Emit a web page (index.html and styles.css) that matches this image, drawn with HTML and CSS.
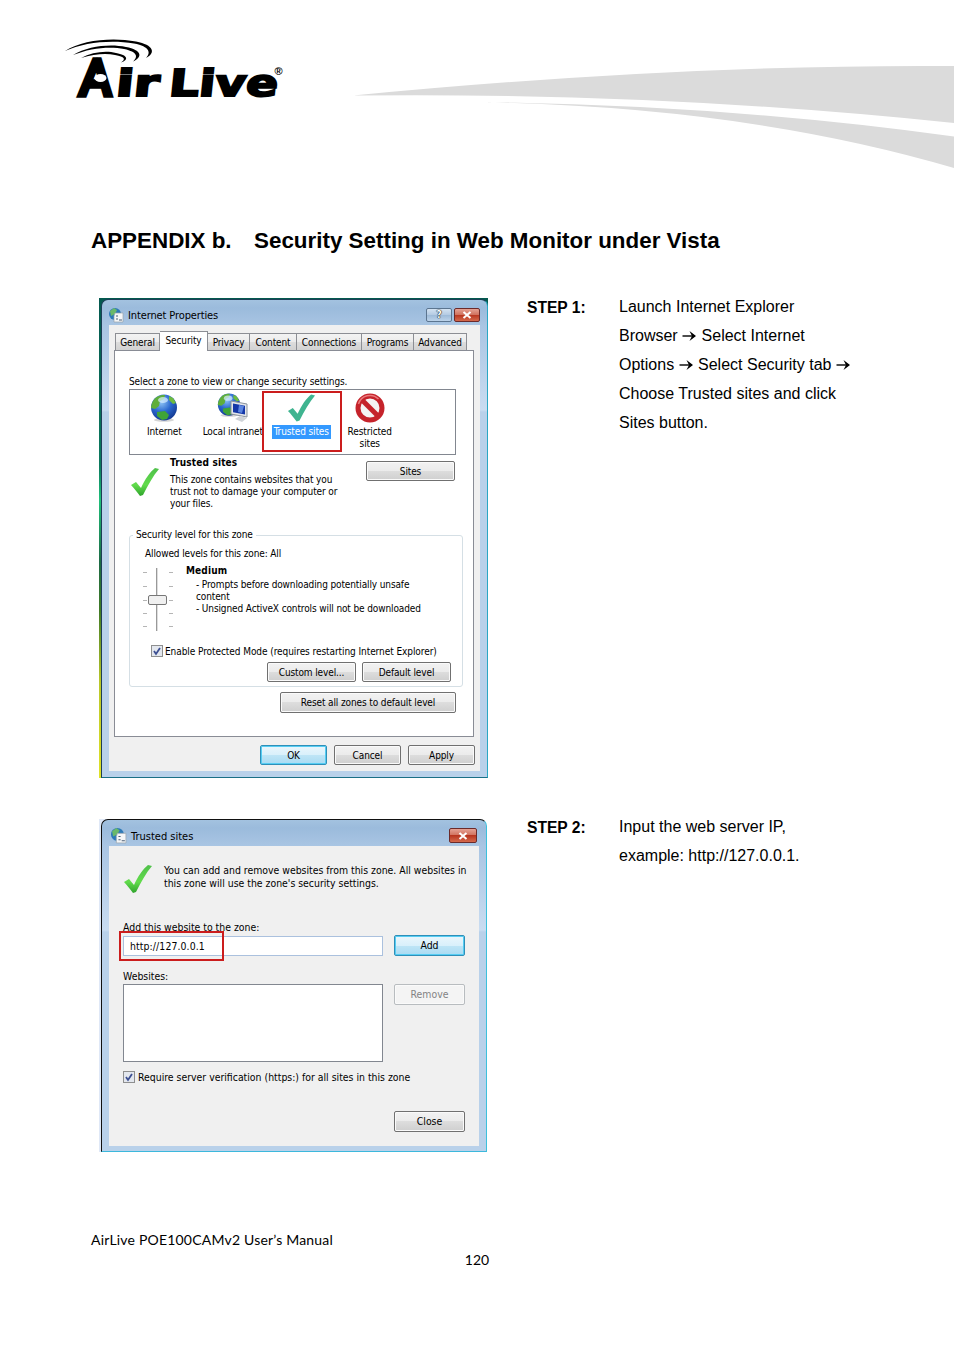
FILE: index.html
```html
<!DOCTYPE html>
<html lang="en">

<head>
    <meta charset="UTF-8">
    <title>AirLive POE100CAMv2 User's Manual</title>
    <link rel="stylesheet" href="styles.css">
</head>

<body>
    <svg width="0" height="0" class="defs">
        <defs>
            <radialGradient id="sea" cx="40%" cy="30%" r="75%">
                <stop offset="0" stop-color="#8fc4f5" />
                <stop offset="0.5" stop-color="#2a68cf" />
                <stop offset="1" stop-color="#12358c" />
            </radialGradient>
            <linearGradient id="tick" x1="0" y1="0" x2="0" y2="1">
                <stop offset="0" stop-color="#4fc04a" />
                <stop offset="0.6" stop-color="#62dc4c" />
                <stop offset="1" stop-color="#2fa32c" />
            </linearGradient>
            <symbol id="globe" viewBox="0 0 28 28">
                <ellipse cx="14" cy="26" rx="10" ry="1.8" fill="#d5d5d5" />
                <circle cx="14" cy="13.500" r="13" fill="url(#sea)" />
                <path d="M3 7C6 2 11 .8 15 1l-1 4-4 2-1 5-4 3-4-1C1 11 2 9 3 7z" fill="#5fae3a" />
                <path d="M19 2l4 2 3 5-3 1-4-4z" fill="#6dbb3e" />
                <path d="M7 18l8-1 4 4-2 4-5 1-5-4z" fill="#3fa437" />
                <ellipse cx="13" cy="6" rx="5" ry="3" fill="#d9efff" opacity=".7" />
            </symbol>
            <symbol id="check" viewBox="0 0 30 30">
                <path d="M1 18l5-3 5 6C15 12 20 5 25 1l4 1C23 9 18 18 13 28l-3 1C7 25 4 21 1 18z" />
            </symbol>
            <symbol id="arrow" viewBox="0 0 15 12">
                <path d="M.5 6h12" stroke="#000" stroke-width="1.400" />
                <path d="M7.500 1L14 6 7.500 11 10 6z" />
            </symbol>
            <symbol id="appicon" viewBox="0 0 15 15">
                <circle cx="6" cy="6" r="6" fill="#2c79b8" />
                <path d="M1 3l4-3 3 2-2 4-4 2z" fill="#69b86a" />
                <path d="M6 5h8v9H5V8z" fill="#f4f6f8" stroke="#9aa5ae" stroke-width=".7" />
                <path d="M7 8h2M7 11h2M10 12h3" stroke="#4c5f75" />
            </symbol>
        </defs>
    </svg>

    <header class="page-header">
        <svg class="logo" width="222" height="62" viewBox="64 38 222 62">
            <path d="M65 51C82 40 112 37 136 41.500C154 45 156 53 146 58C151 53 150 46.500 134 43.500C112 39.500 84 42 65 51z" />
            <path d="M73 55C88 46 110 43.500 126 47C142 50 143 57 133 61.500C138 57 138 52 124 49C110 46 90 48 73 55z" />
            <path d="M81 58C92 52 106 50.500 116 53C128 55 129 60 121 62.500C126 59 125 57 115 55C106 53 94 54 81 58z" />
            <g class="logo-text">
                <text class="big-a" x="0" y="0" font-size="48" textLength="31" lengthAdjust="spacingAndGlyphs" transform="translate(79.500 94.500) skewX(-3)">A</text>
                <text x="0" y="0" font-size="37" textLength="43" lengthAdjust="spacingAndGlyphs" transform="translate(115 96) skewX(-6)">ir</text>
                <text x="0" y="0" font-size="37" textLength="109" lengthAdjust="spacingAndGlyphs" transform="translate(168 96) skewX(-6)">Live</text>
            </g>
            <ellipse cx="100.500" cy="78" rx="6" ry="4" fill="#fff" />
            <text class="reg" x="274.500" y="75">®</text>
        </svg>
        <svg class="swoosh" width="614" height="130" viewBox="340 50 614 130">
            <path d="M353 95.500Q680 64 954 66V123Q660 92 353 95.500z" />
            <path d="M465 102Q720 104 954 136.500V168Q740 105 465 102z" />
        </svg>
    </header>

    <main class="content">
        <h1><span class="num">APPENDIX b.</span><span>Security Setting in Web Monitor under Vista</span></h1>

        <section class="step">
            <div class="shot shot-props">
                <div class="window">
                    <div class="titlebar">
                        <svg width="15" height="15"><use href="#appicon" /></svg>
                        <span class="title">Internet Properties</span>
                        <span class="win-btn help">?</span>
                        <span class="win-btn close"><svg width="10" height="8" viewBox="0 0 10 8"><path d="M1.500 1l7 6M8.500 1l-7 6" /></svg></span>
                    </div>
                    <div class="client">
                        <div class="tabs">
                            <span class="tab t1">General</span>
                            <span class="tab t2 active">Security</span>
                            <span class="tab t3">Privacy</span>
                            <span class="tab t4">Content</span>
                            <span class="tab t5">Connections</span>
                            <span class="tab t6">Programs</span>
                            <span class="tab t7">Advanced</span>
                        </div>
                        <div class="panel">
                            <p class="hint">Select a zone to view or change security settings.</p>
                            <div class="zones">
                                <div class="zone">
                                    <svg width="28" height="30"><use href="#globe" /></svg>
                                    <span>Internet</span>
                                </div>
                                <div class="zone">
                                    <svg width="32" height="30" viewBox="0 0 32 30">
                                        <use href="#globe" width="24" height="24" />
                                        <path d="M14 8l16 3v13l-16-3z" fill="#e3e6ea" stroke="#8b949e" />
                                        <path d="M16 10.500l12 2.200v8.800l-12-2.200z" fill="#1437a8" />
                                        <path d="M22 12l5 1-2 7-4-1z" fill="#5c86e0" />
                                        <path d="M18 26l5-3 7 2-5 4z" fill="#cfd3d8" />
                                    </svg>
                                    <span>Local intranet</span>
                                </div>
                                <div class="zone selected">
                                    <svg width="29" height="30" fill="#3fb490"><use href="#check" /></svg>
                                    <span>Trusted sites</span>
                                </div>
                                <div class="zone">
                                    <svg width="30" height="30" viewBox="0 0 30 30">
                                        <circle cx="15" cy="15" r="12" fill="#f4f4f4" stroke="#c5232b" stroke-width="5" />
                                        <path d="M7 7l16 16" stroke="#c5232b" stroke-width="5" />
                                        <path d="M3.500 11a12 12 0 0 1 20-5" fill="none" stroke="#ea7a7c" stroke-width="1.500" />
                                    </svg>
                                    <span>Restricted<br>sites</span>
                                </div>
                                <div class="mark mark-zone"></div>
                            </div>
                            <div class="details">
                                <svg width="30" height="30" fill="url(#tick)"><use href="#check" /></svg>
                                <div class="about">
                                    <b>Trusted sites</b>
                                    <p>This zone contains websites that you<br>trust not to damage your computer or<br>your files.</p>
                                </div>
                                <span class="btn sites">Sites</span>
                            </div>
                            <div class="group">
                                <span class="legend">Security level for this zone</span>
                                <p class="allowed">Allowed levels for this zone: All</p>
                                <div class="level">
                                    <svg width="32" height="66" viewBox="142 567 32 66">
                                        <path d="M143 572.500h4M143 586.500h4M143 600.500h4M143 613.500h4M143 626.500h4M169 572.500h4M169 586.500h4M169 600.500h4M169 613.500h4M169 626.500h4" stroke="#b5b5b5" />
                                        <path d="M156.500 568v63" stroke="#999" />
                                        <path d="M157.500 568v63" stroke="#ddd" />
                                        <rect x="148.500" y="595.500" width="18" height="9" rx="1.500" fill="#f0f0f0" stroke="#777" />
                                    </svg>
                                    <div class="level-text">
                                        <b>Medium</b>
                                        <p>- Prompts before downloading potentially unsafe<br>content<br>- Unsigned ActiveX controls will not be downloaded</p>
                                    </div>
                                </div>
                                <div class="check-row">
                                    <span class="box"><svg width="8" height="9" viewBox="0 0 8 9"><path d="M1 4l2 3 4-6" /></svg></span>
                                    <span class="protect">Enable Protected Mode (requires restarting Internet Explorer)</span>
                                </div>
                                <div class="level-buttons">
                                    <span class="btn">Custom level...</span>
                                    <span class="btn">Default level</span>
                                </div>
                            </div>
                            <span class="btn reset">Reset all zones to default level</span>
                        </div>
                        <div class="actions">
                            <span class="btn primary">OK</span>
                            <span class="btn">Cancel</span>
                            <span class="btn">Apply</span>
                        </div>
                    </div>
                </div>
            </div>
            <b class="step-no">STEP 1:</b>
            <p class="step-text">Launch Internet Explorer<br>Browser <svg width="15" height="12"><use href="#arrow" /></svg> Select Internet<br>Options <svg width="15" height="12"><use href="#arrow" /></svg> Select Security tab <svg width="15" height="12"><use href="#arrow" /></svg><br>Choose Trusted sites and click<br>Sites button.</p>
        </section>

        <section class="step">
            <div class="shot shot-trusted">
                <div class="window">
                    <div class="titlebar">
                        <svg width="16" height="16"><use href="#appicon" /></svg>
                        <span class="title">Trusted sites</span>
                        <span class="win-btn close"><svg width="10" height="8" viewBox="0 0 10 8"><path d="M1.500 1l7 6M8.500 1l-7 6" /></svg></span>
                    </div>
                    <div class="client">
                        <div class="intro">
                            <svg width="30" height="30" fill="url(#tick)"><use href="#check" /></svg>
                            <p>You can add and remove websites from this zone. All websites in<br>this zone will use the zone's security settings.</p>
                        </div>
                        <p class="add-label">Add this website to the zone:</p>
                        <div class="row">
                            <span class="input">http://127.0.0.1</span>
                            <span class="btn primary">Add</span>
                            <div class="mark mark-url"></div>
                        </div>
                        <p class="list-label">Websites:</p>
                        <div class="row">
                            <div class="list"></div>
                            <span class="btn disabled">Remove</span>
                        </div>
                        <div class="check-row">
                            <span class="box"><svg width="8" height="9" viewBox="0 0 8 9"><path d="M1 4l2 3 4-6" /></svg></span>
                            <span>Require server verification (https:) for all sites in this zone</span>
                        </div>
                        <span class="btn close-btn">Close</span>
                    </div>
                </div>
            </div>
            <b class="step-no">STEP 2:</b>
            <p class="step-text">Input the web server IP,<br>example: http://127.0.0.1.</p>
        </section>
    </main>

    <footer class="page-footer">
        <p>AirLive POE100CAMv2 User’s Manual</p>
        <p class="page-no">120</p>
    </footer>
</body>

</html>
```

FILE: styles.css
```css
* {
    box-sizing: border-box;
}

body {
    margin: 0;
    width: 954px;
    height: 1350px;
    overflow: hidden;
    background: #fff;
    color: #000;
    font-family: "Liberation Sans", Arial, sans-serif;
}

p,
h1 {
    margin: 0;
}

svg {
    flex: none;
}

.defs {
    position: absolute;
}

/* header */
.page-header {
    display: flex;
    justify-content: space-between;
    height: 227px;
    padding: 38px 0 0 64px;
}

.logo {
    overflow: visible;
}

.logo-text {
    font-family: "DejaVu Sans", sans-serif;
    font-weight: bold;
    stroke: #000;
    stroke-width: 2px;
}

.big-a {
    font-weight: normal;
    stroke-width: 5.5px;
}

.reg {
    font-size: 11px;
    font-weight: bold;
}

.swoosh {
    margin-top: 12px;
    fill: #dbdbdb;
}

.content {
    padding-left: 91px;
}

h1 {
    display: flex;
    height: 71px;
    font-size: 22.4px;
    line-height: 28px;
}

h1 .num {
    width: 163px;
}

.step {
    display: flex;
    align-items: flex-start;
    height: 520px;
    padding-left: 8px;
}

.step + .step {
    height: 334px;
}

.step-no {
    width: 92px;
    font-size: 15.6px;
    line-height: 19px;
}

.step-text {
    margin-top: -6px;
    font-size: 16px;
    line-height: 29px;
    white-space: nowrap;
}

.step-text svg {
    vertical-align: -1px;
}

/* dialogs */
.shot {
    flex: none;
    width: 389px;
    margin-right: 39px;
    padding: 1px 0 0 2px;
    font-family: "DejaVu Sans Condensed", "DejaVu Sans", sans-serif;
    font-size: 10px;
    line-height: 12px;
    letter-spacing: -0.12px;
    white-space: nowrap;
}

.shot b {
    letter-spacing: 0.15px;
}

.shot-props {
    height: 480px;
    background: linear-gradient(#04594f, #0b7a5e 35%, #1fc07a 42%, #1c6b45 55%, #3f7a26 65%, #b9c729 80%, #e0e228);
}

.shot-trusted {
    height: 333px;
    margin-top: 1px;
    padding-top: 0;
    background: linear-gradient(90deg, #dfe8f7 10px, #fff 10px);
    font-size: 10.4px;
    letter-spacing: 0;
}

.window {
    height: 100%;
    padding: 0 7px 7px;
    border: 1px solid #1d3f57;
    border-right-color: #2aa7c4;
    border-bottom-color: #1a6f86;
    border-radius: 7px 7px 0 0;
    background: linear-gradient(#a3c2e0, #9bbbdc 8px, #a9c5e3 26px, #c9dcf1 110px, #b9d1ea 112px, #b9d1ea);
}

.shot-trusted .window {
    width: 386px;
    border-color: #111 #3cc0dc #3cb8dc #111;
}

.titlebar {
    display: flex;
    align-items: center;
    height: 25px;
    padding-top: 5px;
}

.title {
    flex: 1;
    margin: 2px 0 0 4px;
    font-size: 11px;
}

.win-btn {
    display: flex;
    align-items: center;
    justify-content: center;
    width: 26px;
    height: 14px;
    margin-left: 2px;
    border: 1px solid #5b7590;
    border-radius: 2px;
    background: linear-gradient(#d3e2f1, #b3cae2 50%, #9dbad8 50%, #bcd3ea);
    color: #fff;
    font-weight: bold;
    text-shadow: 0 0 1px #222, 0 0 1px #222, 0 0 1px #222;
}

.win-btn.close {
    border-color: #6b2a2a;
    background: linear-gradient(#e5a193, #d0705c 50%, #b8351f 50%, #d4694c);
}

.win-btn.close path {
    fill: none;
    stroke: #fff;
    stroke-width: 2;
}

.client {
    height: 446px;
    padding: 6px 6px 0 5px;
    background: #f0f0f0;
}

.tabs {
    display: flex;
    align-items: flex-end;
    height: 19px;
    padding-left: 1px;
}

.tab {
    height: 17px;
    border: 1px solid #8c8e94;
    border-left: 0;
    border-bottom: 0;
    background: linear-gradient(#f3f3f3, #ebebeb 50%, #dddddd 50%, #d2d2d2);
    line-height: 18px;
    text-align: center;
}

.t1 { width: 45px; border-left: 1px solid #8c8e94; }
.t2 { width: 48px; }
.t3 { width: 42px; }
.t4 { width: 47px; }
.t5 { width: 65px; }
.t6 { width: 52px; }
.t7 { width: 53px; }

.tab.active {
    position: relative;
    height: 20px;
    margin-bottom: -1px;
    background: #fff;
}

.panel {
    height: 387px;
    padding: 25px 0 0 14px;
    border: 1px solid #898c95;
    background: #fff;
}

.hint {
    height: 13px;
}

.zones {
    position: relative;
    display: flex;
    width: 327px;
    height: 66px;
    border: 1px solid #828790;
}

.zone {
    display: flex;
    flex-direction: column;
    align-items: center;
    width: 68.5px;
    padding-top: 3px;
    text-align: center;
}

.zone span {
    margin-top: 2px;
    padding: 1px 2px;
}

.zone.selected span {
    background: #3399ff;
    color: #fff;
}

.mark {
    position: absolute;
    border: 2px solid #cb1d1d;
}

.mark-zone {
    left: 132px;
    top: 1px;
    width: 80px;
    height: 61px;
}

.details {
    display: flex;
    width: 326px;
    height: 80px;
}

.details > svg {
    margin: 12px 10px 0 1px;
}

.about {
    flex: 1;
    padding-top: 2px;
}

.about p {
    margin-top: 5px;
}

.btn {
    display: inline-block;
    height: 20px;
    border: 1px solid #707070;
    border-radius: 2px;
    background: linear-gradient(#f2f2f2, #ebebeb 50%, #dddddd 50%, #cfcfcf);
    box-shadow: inset 0 0 0 1px #fafafa;
    line-height: 19px;
    text-align: center;
}

.btn.primary {
    border-color: #2f8fb8;
    background: linear-gradient(#eaf6fc, #d9f0fb 50%, #bfe5f6 50%, #a9dbf3);
    box-shadow: inset 0 0 0 1px #55cdf3;
}

.btn.disabled {
    border-color: #b8bcbf;
    background: #f4f4f4;
    color: #838383;
}

.btn.sites {
    width: 89px;
    margin-top: 6px;
}

.group {
    width: 334px;
    height: 152px;
    border: 1px solid #d5dfe5;
    border-radius: 3px;
}

.legend {
    display: block;
    width: max-content;
    margin: -7px 0 0 3px;
    padding: 0 3px;
    background: #fff;
}

.allowed {
    margin: 7px 0 0 15px;
}

.level {
    display: flex;
    height: 73px;
    padding: 7px 0 0 12px;
}

.level-text {
    margin: -2px 0 0 12px;
}

.level-text p {
    margin: 2px 0 0 10px;
}

.check-row {
    display: flex;
    align-items: center;
    height: 12px;
}

.group .check-row {
    margin: 12px 0 0 21px;
}

.protect {
    padding-top: 1px;
    letter-spacing: -0.07px;
}

.box {
    display: flex;
    align-items: center;
    justify-content: center;
    width: 12px;
    height: 12px;
    margin-right: 2px;
    border: 1px solid #8e8f8f;
    background: #e3e7ee;
}

.box path {
    fill: none;
    stroke: #3c4f92;
    stroke-width: 1.8;
}

.level-buttons {
    display: flex;
    gap: 6px;
    margin: 5px 0 0 137px;
}

.level-buttons .btn {
    width: 89px;
}

.btn.reset {
    width: 176px;
    height: 21px;
    margin: 5px 0 0 151px;
    line-height: 20px;
}

.actions {
    display: flex;
    justify-content: flex-end;
    gap: 7px;
    margin-right: -1px;
    padding-top: 8px;
}

.actions .btn {
    width: 67px;
}

/* trusted sites dialog */
.shot-trusted .titlebar {
    height: 26px;
    padding-left: 2px;
}

.shot-trusted .win-btn.close {
    width: 28px;
    height: 15px;
    margin-right: 2px;
}

.shot-trusted .client {
    height: 300px;
    padding: 18px 14px 0;
}

.shot-trusted .btn {
    line-height: 19px;
}

.intro {
    display: flex;
    height: 57px;
}

.intro p {
    margin-left: 11px;
    line-height: 13px;
}

.row {
    position: relative;
    display: flex;
    justify-content: space-between;
}

.row .btn,
.close-btn {
    width: 71px;
    height: 21px;
}

.input {
    width: 260px;
    height: 20px;
    margin-top: 1px;
    padding-left: 6px;
    border: 1px solid #abc1de;
    background: #fff;
    letter-spacing: 0.1px;
    line-height: 19px;
}

.add-label {
    margin-bottom: 2px;
}

.mark-url {
    left: -4px;
    top: -4px;
    width: 105px;
    height: 30px;
}

.list-label {
    margin: 14px 0 2px;
}

.list {
    width: 260px;
    height: 78px;
    border: 1px solid #828790;
    background: #fff;
}

.shot-trusted .check-row {
    margin-top: 9px;
}

.shot-trusted .box {
    margin-right: 3px;
}

.close-btn {
    display: block;
    margin: 28px 0 0 auto;
}

/* footer */
.page-footer {
    margin-top: 78px;
    font-family: Lato, Calibri, sans-serif;
    font-size: 14px;
    line-height: 20px;
}

.page-footer p {
    padding-left: 91px;
    letter-spacing: 0.2px;
}

.page-footer .page-no {
    padding: 0;
    letter-spacing: 0;
    text-align: center;
}
```
